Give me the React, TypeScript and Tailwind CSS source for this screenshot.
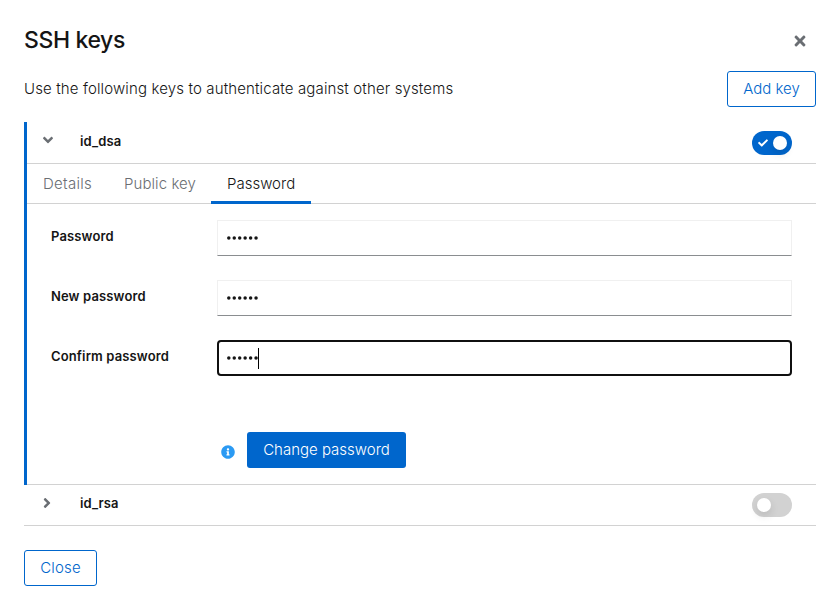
import React from "react";
import { FaTimes, FaAngleDown, FaAngleRight, FaInfoCircle, FaCheck } from "react-icons/fa";

function Bullets() {
  return (
    <svg width="31" height="4" viewBox="0 0 31 4" fill="#151515">
      {[0, 1, 2, 3, 4, 5].map((i) => (
        <circle key={i} cx={1.8 + i * 5.45} cy="2" r="1.75" />
      ))}
    </svg>
  );
}

function Field({ label, focused = false }: { label: string; focused?: boolean }) {
  return (
    <div className="flex h-9">
      <span className="w-[166px] pt-[6px] text-[13px] leading-5 font-semibold tracking-[0.13px]">{label}</span>
      {focused ? (
        <div className="flex h-9 flex-1 items-center rounded-[4px] border-2 border-[#101010] pl-2">
          <Bullets />
          <span className="h-[21px] w-px bg-black" />
        </div>
      ) : (
        <div className="flex h-9 flex-1 items-center border border-[#f0f0f0] border-b-[#8a8d90] pl-[9px]">
          <Bullets />
        </div>
      )}
    </div>
  );
}

function Toggle({ on }: { on: boolean }) {
  return on ? (
    <span className="mt-px flex h-6 w-10 items-center justify-between rounded-full bg-[#0066cc] pr-[5px] pl-[6px]">
      <FaCheck className="size-[10px] text-white" />
      <span className="size-[14px] rounded-full bg-white shadow-[0_4px_8px_rgba(3,3,3,0.12)]" />
    </span>
  ) : (
    <span className="flex h-6 w-10 items-center rounded-full bg-[#d2d2d2] pl-[5px]">
      <span className="size-[14px] rounded-full bg-white shadow-[0_4px_8px_rgba(3,3,3,0.12)]" />
    </span>
  );
}

export default function App() {
  return (
    <main className="h-[610px] w-[840px] bg-white px-6 pt-6 font-['Inter','Noto_Sans',sans-serif] text-[15px] text-[#151515]">
      <header className="flex h-8 justify-between">
        <h1 className="text-[23px] leading-8 font-medium tracking-[-0.38px]">SSH keys</h1>
        <button className="mt-[9px] mr-2 h-4">
          <FaTimes className="size-4 text-[#6a6e73]" />
        </button>
      </header>

      <div className="mt-[15px] flex h-9 items-center justify-between">
        <p className="font-light tracking-[0.135px]">Use the following keys to authenticate against other systems</p>
        <button className="h-9 w-[89px] rounded-[3px] border border-[#0066cc] font-light text-[#0066cc]">Add key</button>
      </div>

      <section className="mt-[15px]">
        <div className="flex h-[363px]">
          <div className="w-[3px] bg-[#0066cc]" />
          <div className="flex-1 border-b border-[#d2d2d2]">
            <div className="flex h-[42px] items-center border-b border-[#d2d2d2] pr-6 pl-[13px]">
              <FaAngleDown className="-mt-[5px] size-4 text-[#6a6e73]" />
              <span className="-mt-px ml-6 flex-1 text-[13px] font-semibold tracking-[0.15px]">id_dsa</span>
              <Toggle on />
            </div>
            <nav className="flex h-10 border-b border-[#d2d2d2] leading-10 font-light text-[#6a6e73]">
              <span className="w-[81px] pl-4 tracking-[0.28px]">Details</span>
              <span className="w-[103px] pl-4 tracking-[0.08px]">Public key</span>
              <span className="h-10 w-[100px] border-b-[3px] border-[#0066cc] pl-4 text-[#151515]">Password</span>
            </nav>
            <div className="flex flex-col gap-6 pt-4 pr-6 pl-6">
              <Field label="Password" />
              <Field label="New password" />
              <Field label="Confirm password" focused />
            </div>
            <div className="mt-14 flex items-center pl-[194px]">
              <FaInfoCircle className="mt-1 size-[14px] text-[#2b9af3]" />
              <button className="ml-3 h-9 w-[159px] rounded-[3px] bg-[#0066cc] font-light text-white">Change password</button>
            </div>
          </div>
        </div>
        <div className="flex h-[41px] items-center border-b border-[#d2d2d2] pr-6 pl-[15px]">
          <FaAngleRight className="-mt-[5px] size-4 text-[#6a6e73]" />
          <span className="-mt-[3px] ml-[25px] flex-1 text-[13px] font-semibold tracking-[0.12px]">id_rsa</span>
          <Toggle on={false} />
        </div>
      </section>

      <button className="mt-6 h-9 w-[73px] rounded-[3px] border border-[#0066cc] font-light tracking-[0.15px] text-[#0066cc]">Close</button>
    </main>
  );
}
